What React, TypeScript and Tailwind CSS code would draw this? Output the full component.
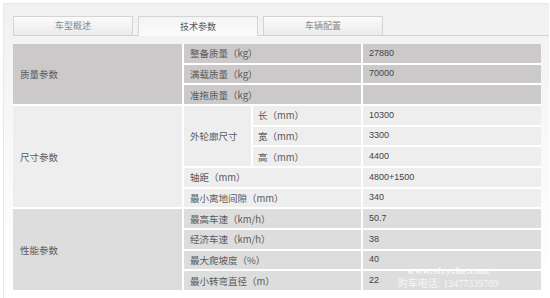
import React from 'react';

const cjk = { fontFamily: '"Noto Sans CJK SC", "Liberation Sans", sans-serif' };
const num = { fontFamily: '"Liberation Sans", Arial, sans-serif' };

function Cell({ className = '', children }: { className?: string; children?: React.ReactNode }) {
  return <div className={`flex items-center text-[9.5px] text-[#5a5a5a] ${className}`}>{children}</div>;
}

function Value({ bg, row, children }: { bg: string; row: string; children?: React.ReactNode }) {
  return (
    <div className={`col-start-4 ${row} ${bg} flex items-center pl-[6px] text-[9px] text-[#444]`} style={num}>
      {children}
    </div>
  );
}

export default function App() {
  const g1 = 'bg-[#cbc9ca]';
  const g2 = 'bg-[#eeeeee]';
  const g3 = 'bg-[#dddddd]';

  return (
    <div className="w-[550px] h-[298px] bg-white pt-[3px] pl-[3px] overflow-hidden relative" style={cjk}>
      <div className="w-[546px] h-[295px] border-t border-l border-[#e9e9e9] bg-gradient-to-b from-[#f1f1f1] via-[#f9f9f9] to-white pl-[9px] pt-[12px]">
        {/* tabs */}
        <div className="flex gap-[5px] border-b border-[#d2d2d2] w-[536px] h-[20px]">
          <div className="w-[120px] h-[19px] border border-b-0 border-[#d4d4d4] bg-gradient-to-b from-[#fbfbfb] to-[#ebebeb] flex items-center justify-center text-[9px] text-[#8a8a8a]">
            车型概述
          </div>
          <div className="w-[120px] h-[20px] border border-b-0 border-[#d4d4d4] bg-gradient-to-b from-[#f4f4f4] to-[#fbfbfb] flex items-center justify-center text-[9px] text-[#555]">
            技术参数
          </div>
          <div className="w-[120px] h-[19px] border border-b-0 border-[#d4d4d4] bg-gradient-to-b from-[#fbfbfb] to-[#ebebeb] flex items-center justify-center text-[9px] text-[#8a8a8a]">
            车辆配置
          </div>
        </div>

        {/* spec table */}
        <div className="mt-[8px] w-[528px] h-[246px] grid grid-cols-[169px_67px_108px_178px] grid-rows-[repeat(12,minmax(0,1fr))] gap-[2px] bg-white">
          {/* 质量参数 */}
          <Cell className={`col-start-1 row-start-1 row-span-3 ${g1} pl-[7px]`}>质量参数</Cell>
          <Cell className={`col-start-2 col-span-2 row-start-1 ${g1} pl-[6px]`}>整备质量（kg）</Cell>
          <Value bg={g1} row="row-start-1">27880</Value>
          <Cell className={`col-start-2 col-span-2 row-start-2 ${g1} pl-[6px]`}>满载质量（kg）</Cell>
          <Value bg={g1} row="row-start-2">70000</Value>
          <Cell className={`col-start-2 col-span-2 row-start-3 ${g1} pl-[6px]`}>准拖质量（kg）</Cell>
          <Value bg={g1} row="row-start-3" />

          {/* 尺寸参数 */}
          <Cell className={`col-start-1 row-start-4 row-span-5 ${g2} pl-[7px]`}>尺寸参数</Cell>
          <Cell className={`col-start-2 row-start-4 row-span-3 ${g2} pl-[6px]`}>外轮廓尺寸</Cell>
          <Cell className={`col-start-3 row-start-4 ${g2} pl-[5px]`}>长（mm）</Cell>
          <Value bg={g2} row="row-start-4">10300</Value>
          <Cell className={`col-start-3 row-start-5 ${g2} pl-[5px]`}>宽（mm）</Cell>
          <Value bg={g2} row="row-start-5">3300</Value>
          <Cell className={`col-start-3 row-start-6 ${g2} pl-[5px]`}>高（mm）</Cell>
          <Value bg={g2} row="row-start-6">4400</Value>
          <Cell className={`col-start-2 col-span-2 row-start-7 ${g2} pl-[6px]`}>轴距（mm）</Cell>
          <Value bg={g2} row="row-start-7">4800+1500</Value>
          <Cell className={`col-start-2 col-span-2 row-start-8 ${g2} pl-[6px]`}>最小离地间隙（mm）</Cell>
          <Value bg={g2} row="row-start-8">340</Value>

          {/* 性能参数 */}
          <Cell className={`col-start-1 row-start-9 row-span-4 ${g3} pl-[7px]`}>性能参数</Cell>
          <Cell className={`col-start-2 col-span-2 row-start-9 ${g3} pl-[6px]`}>最高车速（km/h）</Cell>
          <Value bg={g3} row="row-start-9">50.7</Value>
          <Cell className={`col-start-2 col-span-2 row-start-10 ${g3} pl-[6px]`}>经济车速（km/h）</Cell>
          <Value bg={g3} row="row-start-10">38</Value>
          <Cell className={`col-start-2 col-span-2 row-start-11 ${g3} pl-[6px]`}>最大爬坡度（%）</Cell>
          <Value bg={g3} row="row-start-11">40</Value>
          <Cell className={`col-start-2 col-span-2 row-start-12 ${g3} pl-[6px]`}>最小转弯直径（m）</Cell>
          <Value bg={g3} row="row-start-12">22</Value>
        </div>
      </div>

      {/* watermark */}
      <div
        className="absolute left-[396px] top-[264px] w-[104px] flex flex-col items-center leading-[13px] text-white/75 font-bold pointer-events-none"
        style={{ fontFamily: '"Liberation Serif", "Noto Sans CJK SC", serif' }}
      >
        <span className="text-[11px]">www.sfzyche.com</span>
        <span className="text-[10px] font-normal">购车电话: 13477339709</span>
      </div>
    </div>
  );
}
